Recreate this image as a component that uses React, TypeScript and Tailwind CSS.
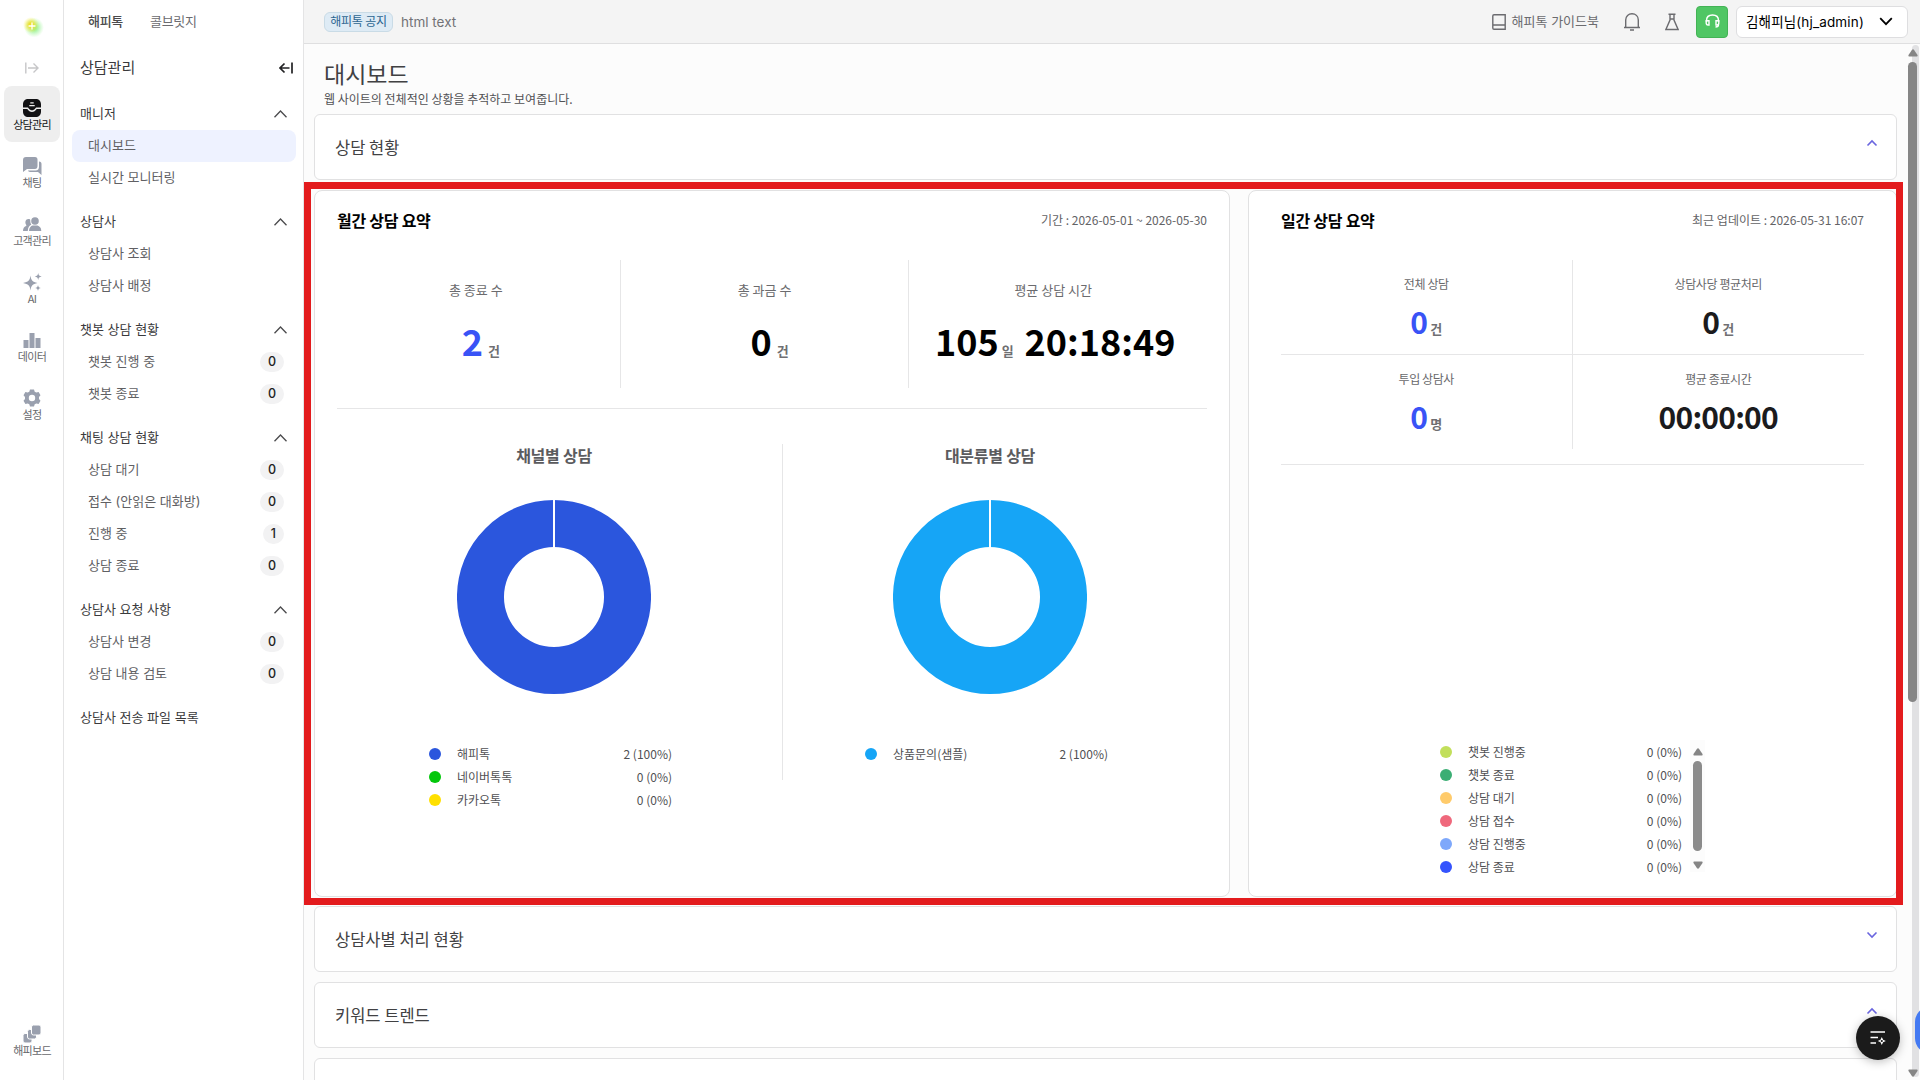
import { clsx } from "clsx";
import type { ReactNode } from "react";

type MenuItem = { label: string; count?: number; active?: boolean };
type MenuGroup = { title: string; items: MenuItem[] };

const menu: MenuGroup[] = [
  {
    title: "매니저",
    items: [{ label: "대시보드", active: true }, { label: "실시간 모니터링" }],
  },
  {
    title: "상담사",
    items: [{ label: "상담사 조회" }, { label: "상담사 배정" }],
  },
  {
    title: "챗봇 상담 현황",
    items: [
      { label: "챗봇 진행 중", count: 0 },
      { label: "챗봇 종료", count: 0 },
    ],
  },
  {
    title: "채팅 상담 현황",
    items: [
      { label: "상담 대기", count: 0 },
      { label: "접수 (안읽은 대화방)", count: 0 },
      { label: "진행 중", count: 1 },
      { label: "상담 종료", count: 0 },
    ],
  },
  {
    title: "상담사 요청 사항",
    items: [
      { label: "상담사 변경", count: 0 },
      { label: "상담 내용 검토", count: 0 },
    ],
  },
];

type LegendItem = { label: string; value: string; color: string };

const channelLegend: LegendItem[] = [
  { label: "해피톡", value: "2 (100%)", color: "bg-[#2b56dd]" },
  { label: "네이버톡톡", value: "0 (0%)", color: "bg-[#03c70b]" },
  { label: "카카오톡", value: "0 (0%)", color: "bg-[#ffe000]" },
];

const categoryLegend: LegendItem[] = [
  { label: "상품문의(샘플)", value: "2 (100%)", color: "bg-[#16a5f6]" },
];

const dailyLegend: LegendItem[] = [
  { label: "챗봇 진행중", value: "0 (0%)", color: "bg-[#c2df5b]" },
  { label: "챗봇 종료", value: "0 (0%)", color: "bg-[#3bae74]" },
  { label: "상담 대기", value: "0 (0%)", color: "bg-[#ffcb6b]" },
  { label: "상담 접수", value: "0 (0%)", color: "bg-[#ef687c]" },
  { label: "상담 진행중", value: "0 (0%)", color: "bg-[#7ea8fb]" },
  { label: "상담 종료", value: "0 (0%)", color: "bg-[#3553fd]" },
];

export default function App() {
  return (
    <div className="relative flex h-[1080px] w-[1920px] overflow-hidden bg-[#fcfcfc] font-['Noto_Sans_CJK_KR',sans-serif] text-[#4b4b4d]">
      <Rail />
      <Sidebar />
      <div className="flex min-w-0 flex-1 flex-col">
        <Header />
        <Dashboard />
      </div>

      <div className="absolute top-[182px] left-[304px] h-[723px] w-[1599px] border-7 border-[#e31b1d]" />
      <PageScrollbar />
      <div className="absolute top-[1006px] left-[1915px] h-12 w-12 rounded-2xl bg-[#4379f2]" />
      <button className="absolute top-[1016px] left-[1856px] flex h-11 w-11 items-center justify-center rounded-full bg-[#1b1b1b] shadow-[0_2px_10px_rgba(0,0,0,0.25)]">
        <svg width="16" height="14" viewBox="0 0 16 14" fill="none">
          <path d="M0.5 1H15M0.5 6.5H8M0.5 12H6" stroke="#fff" strokeWidth="1.5" />
          <path
            fill="#fff"
            fillRule="evenodd"
            d="M11.8 6L13.1 8.7L15.8 10L13.1 11.3L11.8 14L10.5 11.3L7.8 10L10.500 8.700ZM11.8 8.900A1.100 1.100 0 1 0 11.8 11.100A1.100 1.100 0 1 0 11.8 8.900Z"
          />
        </svg>
      </button>
    </div>
  );
}

const Rail = () => (
  <nav className="flex w-16 shrink-0 flex-col items-center border-r border-[#e4e4e5] bg-white">
    <div className="flex h-[52px] items-center">
      <svg width="24" height="24" viewBox="0 0 24 24">
        <defs>
          <radialGradient id="glowGreen">
            <stop offset="0.2" stopColor="#8df08a" />
            <stop offset="1" stopColor="#b6f7b0" stopOpacity="0" />
          </radialGradient>
          <radialGradient id="glowYellow">
            <stop offset="0.25" stopColor="#ecdf2e" />
            <stop offset="1" stopColor="#f6f26a" stopOpacity="0" />
          </radialGradient>
        </defs>
        <circle cx="14" cy="13.5" r="10" fill="url(#glowGreen)" />
        <circle cx="11" cy="11" r="8" fill="url(#glowYellow)" />
        <path d="M12 9V15M9 12H15" stroke="#fff" strokeWidth="1.3" strokeLinecap="round" />
      </svg>
    </div>
    <div className="flex h-[34px] items-center pb-0.5">
      <svg width="14" height="12" viewBox="0 0 14 12" fill="none" stroke="#c6c6c8" strokeWidth="1.4">
        <path d="M0.8 0.5V11.5M3 6H13M8.5 1.5L13 6L8.5 10.5" />
      </svg>
    </div>
    <div className="flex flex-col gap-0.5">
      <RailItem label="상담관리" active>
        <path d="M5.5 0H12.5C16 0 18 2 18 5.5V8.5H13.5C12.3 8.5 11.8 11.3 9 11.3S5.7 8.5 4.5 8.5H0V5.5C0 2 2 0 5.5 0Z" />
        <path d="M0 9.9H4.2C5 9.9 5.6 12.9 9 12.9S13 9.9 13.8 9.9H18V12.5C18 16 16 18 12.5 18H5.5C2 18 0 16 0 12.5Z" />
        <path d="M7.3 3.8H10.7M6.3 6.6H11.7" stroke="#eee" strokeWidth="1.2" />
      </RailItem>
      <RailItem label="채팅">
        <path d="M3 0H12C13.7 0 14.5 1 14.5 2.5V9C14.5 11 13.5 12 12 12H4L0 15V3C0 1 1 0 3 0Z" />
        <path d="M16 4.5C17.8 4.5 18.5 5.5 18.5 7V18L15 15H7C5.8 15 5.2 14.5 5 13.6H12.5C15 13.6 16 12 16 9.5Z" />
      </RailItem>
      <RailItem label="고객관리">
        <circle cx="12" cy="6" r="3.8" />
        <path d="M6 16C6 12.5 8 10.8 9.5 10.4H14.5C16.5 11 18.3 12.5 18.3 16Z" />
        <path d="M5.5 4C7 4 7.4 4.6 7.3 6C7.2 7.6 7.8 8.8 8.4 9.6C6.3 10.8 5 12.5 4.8 16H0C0 13.5 1 11.8 3 11C3.6 10.7 3.4 10.3 3 9.6C1.8 7.5 2.4 4 5.5 4Z" />
      </RailItem>
      <RailItem label="AI">
        <path d="M7.5 2.5C8.2 7.5 9.5 9 14.5 10C9.5 11 8.2 12.5 7.5 17.5C6.8 12.5 5.5 11 0 10C5.5 9 6.8 7.5 7.5 2.5Z" />
        <path d="M15.2 0C15.6 2.3 16.3 3 18.7 3.5C16.3 4 15.6 4.7 15.2 7C14.8 4.7 14.1 4 11.8 3.5C14.1 3 14.8 2.3 15.2 0Z" />
        <path d="M15 12C15.3 13.9 16 14.6 18 15C16 15.4 15.3 16.1 15 18C14.7 16.1 14 15.4 12 15C14 14.6 14.7 13.9 15 12Z" />
      </RailItem>
      <RailItem label="데이터">
        <path d="M0.5 9H5.5V17H0.5ZM6.5 2H11.5V17H6.5ZM12.5 7H17.5V17H12.5Z" />
      </RailItem>
      <RailItem label="설정">
        <path
          fillRule="evenodd"
          d="M7 0.5H11L11.7 2.7L13.3 3.6L15.6 3L17.5 6.3L16 8.1V9.9L17.5 11.7L15.6 15L13.3 14.4L11.7 15.3L11 17.5H7L6.3 15.3L4.7 14.4L2.4 15L0.5 11.7L2 9.9V8.1L0.5 6.3L2.4 3L4.7 3.6L6.3 2.7ZM9 5.8A3.2 3.2 0 1 0 9 12.2A3.2 3.2 0 1 0 9 5.8Z"
        />
      </RailItem>
    </div>
    <div className="mt-auto mb-3">
      <RailItem label="해피보드">
        <g stroke="#fff" strokeWidth="1">
          <rect x="0" y="8.5" width="9" height="9.5" rx="2" />
          <rect x="4.5" y="4.5" width="9" height="9.5" rx="2" />
          <rect x="8.5" y="0" width="9.5" height="10" rx="2" />
        </g>
      </RailItem>
    </div>
  </nav>
);

type RailItemProps = {
  readonly label: string;
  readonly active?: boolean;
  readonly children: ReactNode;
};

const RailItem = ({ label, active, children }: RailItemProps) => (
  <div
    className={clsx(
      "flex h-14 w-14 flex-col items-center rounded-lg pt-[13px]",
      active && "bg-[#eeeeee]"
    )}
  >
    <svg
      width="18"
      height="18"
      viewBox="0 0 18 18"
      className={clsx("shrink-0 overflow-visible", active ? "fill-[#111113]" : "fill-[#9aa0ae]")}
    >
      {children}
    </svg>
    <span
      className={clsx(
        "-mt-px pl-px text-[11px] leading-4 tracking-[-0.7px]",
        active ? "text-[#111113]" : "text-[#68686c]"
      )}
    >
      {label}
    </span>
  </div>
);

const Sidebar = () => (
  <aside className="flex w-60 shrink-0 flex-col border-r border-[#e4e4e5] bg-white font-['Inter','Noto_Sans_CJK_KR',sans-serif] text-[13px]">
    <div className="flex h-11 items-center gap-[27px] pl-6 tracking-[-0.3px]">
      <span className="font-medium">해피톡</span>
      <span className="text-[#6b6b6f]">콜브릿지</span>
    </div>
    <div className="mb-[6px] flex h-12 items-center justify-between pr-[10px] pl-4">
      <span className="text-[15px] text-[#3a3a3c]">상담관리</span>
      <svg width="14" height="12" viewBox="0 0 14 12" fill="none" stroke="#222224" strokeWidth="1.7">
        <path d="M13 0.5V11.5M10.5 6H1M5.5 1.5L1 6L5.5 10.5" />
      </svg>
    </div>
    <div className="flex flex-col gap-3 pr-[7px] pl-2">
      {menu.map((group) => (
        <div key={group.title}>
          <div className="flex h-8 items-center justify-between pr-[9px] pl-2">
            <span className="text-[#3a3a3c]">{group.title}</span>
            <svg width="13" height="8" viewBox="0 0 13 8" fill="none" stroke="#4b4b4d" strokeWidth="1.3">
              <path d="M0.5 7.3L6.5 1L12.5 7.3" />
            </svg>
          </div>
          {group.items.map((item) => (
            <div
              key={item.label}
              className={clsx(
                "flex h-8 items-center justify-between rounded-lg pr-3 pl-4 text-[#606063]",
                item.active && "bg-[#eef2ff]"
              )}
            >
              <span>{item.label}</span>
              {item.count !== undefined && (
                <span className="flex h-5 items-center rounded-full bg-[#f2f2f3] px-2 text-[12.5px] font-medium text-[#222224]">
                  {item.count}
                </span>
              )}
            </div>
          ))}
        </div>
      ))}
      <div className="flex h-8 items-center pl-2 text-[#3a3a3c]">
        상담사 전송 파일 목록
      </div>
    </div>
  </aside>
);

const Header = () => (
  <header className="flex h-11 shrink-0 items-center justify-between border-b border-[#dfdfe0] bg-[#f4f4f4] pr-3 pl-5">
    <div className="flex items-center gap-2">
      <span className="flex h-5 w-[69px] items-center justify-center rounded-md border border-[#c9dbe6] bg-[#deebf5] pb-px text-[12px] tracking-[-0.2px] text-[#2c6591]">
        해피톡 공지
      </span>
      <span className="pt-px font-['Inter',sans-serif] text-[13.5px] text-[#727276]">html text</span>
    </div>
    <div className="flex items-center gap-2">
      <div className="mr-[17px] flex items-center gap-[6px]">
        <svg width="14" height="16" viewBox="0 0 14 16" fill="none" stroke="#6b6b6f" strokeWidth="1.4">
          <path d="M2 0.8H13.2V15.2H2C1.2 15.2 0.8 14.8 0.8 14V2C0.8 1.2 1.2 0.8 2 0.8ZM0.8 11H13.2" />
        </svg>
        <span className="font-['Inter','Noto_Sans_CJK_KR',sans-serif] text-[13px] text-[#6b6b6f]">
          해피톡 가이드북
        </span>
      </div>
      <svg className="mr-[9px]" width="16" height="18" viewBox="0 0 16 18" fill="none" stroke="#6b6b6f" strokeWidth="1.4">
        <path d="M0 14.5H16M1.7 14.5V7C1.7 3 4.5 0.8 8 0.8S14.3 3 14.3 7V14.5M6 17H10" />
      </svg>
      <svg className="mr-[9px] ml-2" width="14" height="18" viewBox="0 0 14 18" fill="none" stroke="#6b6b6f" strokeWidth="1.4">
        <path d="M3.5 1.2H10.5M5 1.2V7L0.9 16.5H13.1L9 7V1.2M5 6H9" />
      </svg>
      <button className="flex h-8 w-8 items-center justify-center rounded border border-[#43b355] bg-[#50c664]">
        <svg className="-mt-0.5" width="15" height="14" viewBox="0 0 15 14" fill="none" stroke="#fff" strokeWidth="1.4">
          <path d="M1.5 8V6.5C1.5 3 4 1 7.5 1S13.5 3 13.5 6.5V8M13.5 10.5C13.5 12.3 12.5 13 10.5 13" />
          <path d="M1.2 6.8H4V11H3C1.8 11 1.2 10.3 1.2 9ZM13.8 6.8H11V11H12C13.2 11 13.8 10.3 13.8 9Z" />
        </svg>
      </button>
      <button className="flex h-8 w-[172px] items-center justify-between rounded-md border border-[#dedee0] bg-white pr-[14px] pl-[9px] font-['Inter','Noto_Sans_CJK_KR',sans-serif] text-[13.5px] tracking-[0.15px] text-black">
        <span className="pt-px">김해피님(hj_admin)</span>
        <svg width="14" height="9" viewBox="0 0 14 9" fill="none" stroke="#000" strokeWidth="1.8">
          <path d="M1.2 1.2L7 7.2L12.8 1.2" />
        </svg>
      </button>
    </div>
  </header>
);

const Dashboard = () => (
  <main className="flex min-h-0 flex-1 flex-col overflow-hidden pr-[23px] pl-[10px]">
    <div className="flex h-[70px] shrink-0 flex-col pt-3 pl-[10px]">
      <h1 className="text-[23px] leading-[34px] text-[#414143]">대시보드</h1>
      <p className="mt-px text-[12px] leading-4 text-[#515154]">
        웹 사이트의 전체적인 상황을 추적하고 보여줍니다.
      </p>
    </div>
    <div className="flex flex-col gap-[10px]">
      <Accordion title="상담 현황" open />
      <div className="-mb-px flex h-[707px] gap-[18px]">
        <MonthlySummary />
        <DailySummary />
      </div>
      <Accordion title="상담사별 처리 현황" />
      <Accordion title="키워드 트렌드" open />
      <Accordion title="" open />
    </div>
  </main>
);

type AccordionProps = { readonly title: string; readonly open?: boolean };

const Accordion = ({ title, open }: AccordionProps) => (
  <section className="flex h-[66px] shrink-0 items-center justify-between rounded-md border border-[#e1e1e2] bg-white pr-[18px] pl-5">
    <h2 className="text-[16.5px] text-[#414143]">{title}</h2>
    <svg
      className={clsx("-mt-2", !open && "rotate-180")}
      width="12"
      height="8"
      viewBox="0 0 12 8"
      fill="none"
      stroke="#6a66df"
      strokeWidth="1.6"
    >
      <path d="M1.5 6.5L6 2L10.5 6.5" />
    </svg>
  </section>
);

const MonthlySummary = () => (
  <section className="flex w-[916px] flex-col rounded-lg border border-[#e1e1e2] bg-white px-[22px]">
    <SummaryTitle title="월간 상담 요약" note="기간 : 2026-05-01 ~ 2026-05-30" />
    <div className="border-b border-[#e6e6e7] pt-3 pb-5">
      <div className="-ml-[5px] flex h-32 w-[865px] divide-x divide-[#e6e6e7]">
        <MonthlyStat label="총 종료 수">
          <span className="ml-[10px] text-[#3953f6]">2</span>
          <Unit className="ml-[5px]">건</Unit>
        </MonthlyStat>
        <MonthlyStat label="총 과금 수">
          <span className="ml-[10px]">0</span>
          <Unit className="ml-[5px]">건</Unit>
        </MonthlyStat>
        <MonthlyStat label="평균 상담 시간">
          <span className="ml-1">105</span>
          <Unit className="mr-[11px] ml-[3px]">일</Unit>
          20:18:49
        </MonthlyStat>
      </div>
    </div>
    <div className="flex pt-[35px]">
      <ChartColumn title="채널별 상담" color="fill-[#2b56dd]" legend={channelLegend} />
      <div className="mr-[-10px] ml-[11px] h-[336px] w-px bg-[#e6e6e7]" />
      <ChartColumn title="대분류별 상담" color="fill-[#16a5f6]" legend={categoryLegend} />
    </div>
  </section>
);

const SummaryTitle = ({ title, note }: { title: string; note: string }) => (
  <div className="flex h-[57px] shrink-0 items-center justify-between">
    <h3 className="text-base font-bold tracking-[-0.25px] text-black">{title}</h3>
    <span className="text-[12px] text-[#636366]">{note}</span>
  </div>
);

type StatProps = { readonly label: string; readonly children: ReactNode };

const MonthlyStat = ({ label, children }: StatProps) => (
  <div className="flex flex-1 flex-col items-center pt-5">
    <span className="text-[13px] leading-5 text-[#6b6b6e]">{label}</span>
    <div className="mt-[14px] flex items-baseline text-4xl leading-[52px] font-bold text-black">
      {children}
    </div>
  </div>
);

type UnitProps = { readonly className: string; readonly children: ReactNode };

const Unit = ({ className, children }: UnitProps) => (
  <span className={clsx("text-[13px] leading-5 font-bold tracking-normal text-[#6f6f72]", className)}>
    {children}
  </span>
);

type ChartColumnProps = {
  readonly title: string;
  readonly color: string;
  readonly legend: LegendItem[];
};

const ChartColumn = ({ title, color, legend }: ChartColumnProps) => (
  <div className="flex w-[434px] flex-col items-center">
    <h4 className="-mt-px text-base leading-6 font-bold tracking-[-0.25px] text-[#5b5b5e]">{title}</h4>
    <svg className="mt-[33px]" width="194" height="194" viewBox="0 0 194 194">
      <path
        className={color}
        fillRule="evenodd"
        d="M97 0A97 97 0 1 1 97 194A97 97 0 1 1 97 0ZM97 47A50 50 0 1 0 97 147A50 50 0 1 0 97 47Z"
      />
      <path d="M97 0V48" stroke="#fff" strokeWidth="2" />
    </svg>
    <div className="mt-[48px] mr-[7px] w-[243px]">
      <Legend items={legend} />
    </div>
  </div>
);

const Legend = ({ items }: { items: LegendItem[] }) => (
  <ul>
    {items.map((item) => (
      <li key={item.label} className="flex h-[23px] items-center text-[12px] text-[#505053]">
        <span className={clsx("mr-4 h-3 w-3 rounded-full", item.color)} />
        <span className="flex-1">{item.label}</span>
        <span>{item.value}</span>
      </li>
    ))}
  </ul>
);

const DailySummary = () => (
  <section className="flex flex-1 flex-col rounded-lg border border-[#e1e1e2] bg-white px-8">
    <SummaryTitle title="일간 상담 요약" note="최근 업데이트 : 2026-05-31 16:07" />
    <div className="border-b border-[#e6e6e7] pt-3 pb-[15px]">
      <div className="grid h-[189px] grid-cols-2 grid-rows-[95px_94px]">
        <DailyStat label="전체 상담" className="border-r border-b">
          <span className="text-[#3953f6]">0</span>
          <Unit className="ml-[3px]">건</Unit>
        </DailyStat>
        <DailyStat label="상담사당 평균처리" className="border-b">
          0<Unit className="ml-[3px]">건</Unit>
        </DailyStat>
        <DailyStat label="투입 상담사" className="border-r">
          <span className="text-[#3953f6]">0</span>
          <Unit className="ml-[3px]">명</Unit>
        </DailyStat>
        <DailyStat label="평균 종료시간">00:00:00</DailyStat>
      </div>
    </div>
    <div className="mt-auto mb-[18px] ml-[159px] flex h-[138px]">
      <div className="w-[242px]">
        <Legend items={dailyLegend} />
      </div>
      <div className="ml-2 flex h-[132px] w-[15px] flex-col items-center bg-[#fcfcfc] pt-2 pb-[3px]">
        <Triangle />
        <div className="mt-[5px] h-[90px] w-[9px] shrink-0 rounded-full bg-[#8b8b8b]" />
        <Triangle className="mt-auto rotate-180" />
      </div>
    </div>
  </section>
);

const DailyStat = ({ label, className, children }: StatProps & { className?: string }) => (
  <div className={clsx("flex flex-col items-center border-[#e6e6e7] pt-[14px]", className)}>
    <span className="text-[12px] leading-5 tracking-[-0.4px] text-[#68686b]">{label}</span>
    <div className="mt-[5px] flex items-baseline text-3xl leading-[44px] font-bold tracking-[-0.8px] text-[#1b1b1d]">
      {children}
    </div>
  </div>
);

const Triangle = ({ className }: { className?: string }) => (
  <svg className={clsx("shrink-0", className)} width="10" height="8" viewBox="0 0 10 8" fill="#858585">
    <path d="M5 0.3C5.5 0.3 5.8 0.6 6.1 1L9.5 6C9.8 6.8 9.5 7.5 8.7 7.5H1.3C0.5 7.5 0.2 6.8 0.5 6L3.9 1C4.2 0.6 4.5 0.3 5 0.3Z" />
  </svg>
);

const PageScrollbar = () => (
  <div className="absolute top-[45px] right-0 flex h-[1032px] w-3 flex-col items-start">
    <div className="absolute top-0 right-px h-full w-[7px] rounded-full bg-[#e1e1e3]" />
    <Triangle className="relative mt-1" />
    <div className="relative mt-[5px] h-[640px] w-[9px] rounded-full bg-[#868686]" />
    <Triangle className="relative mt-auto rotate-180" />
  </div>
);
